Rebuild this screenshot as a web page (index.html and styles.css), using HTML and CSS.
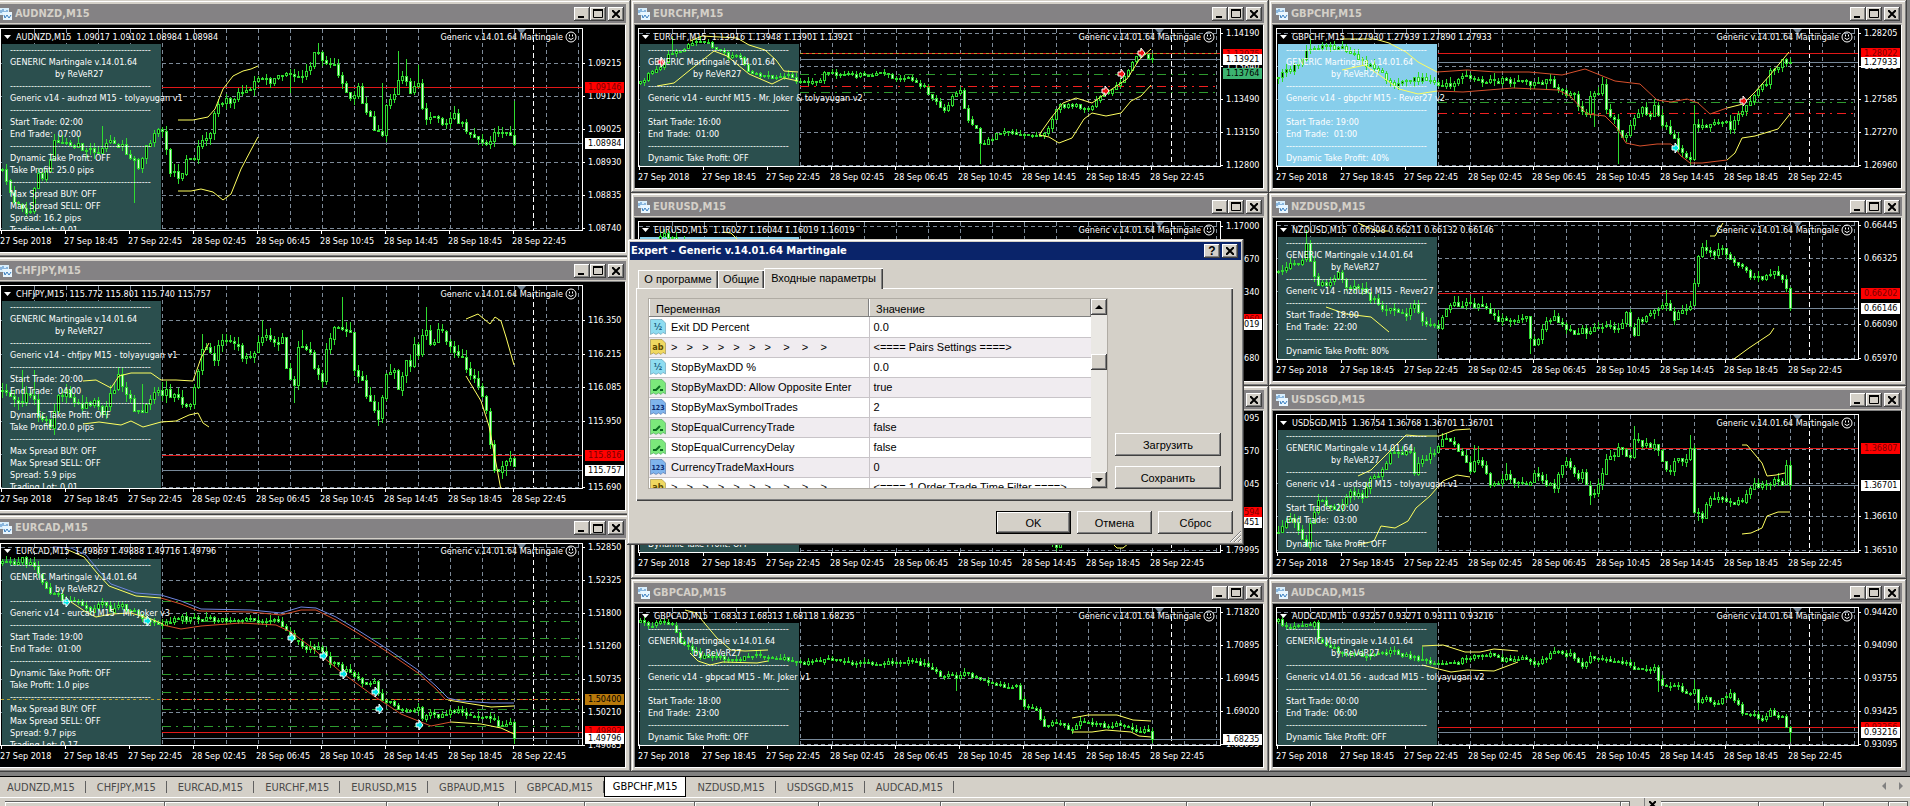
FILE: index.html
```html
<!DOCTYPE html>
<html lang="ru">
<head>
<meta charset="utf-8">
<title>Expert - Generic v.14.01.64 Martingale</title>
<link rel="stylesheet" href="styles.css">
</head>
<body>
<main class="workspace">
  <div class="column column-three" data-symbols="AUDNZD CHFJPY EURCAD"></div>
  <div class="column column-four" data-symbols="EURCHF EURUSD GBPAUD GBPCAD"></div>
  <div class="column column-four" data-symbols="GBPCHF NZDUSD USDSGD AUDCAD"></div>
</main>

<nav class="chart-tabs" aria-label="Charts">
  <button class="chart-tab">AUDNZD,M15</button>
  <button class="chart-tab">CHFJPY,M15</button>
  <button class="chart-tab">EURCAD,M15</button>
  <button class="chart-tab">EURCHF,M15</button>
  <button class="chart-tab">EURUSD,M15</button>
  <button class="chart-tab">GBPAUD,M15</button>
  <button class="chart-tab">GBPCAD,M15</button>
  <button class="chart-tab active">GBPCHF,M15</button>
  <button class="chart-tab">NZDUSD,M15</button>
  <button class="chart-tab">USDSGD,M15</button>
  <button class="chart-tab">AUDCAD,M15</button>
  <span class="tab-arrows">
    <button aria-label="Previous"><svg width="5" height="8"><path d="M5 0L1 4L5 8z"/></svg></button>
    <button aria-label="Next"><svg width="5" height="8"><path d="M0 0L4 4L0 8z"/></svg></button>
  </span>
</nav>

<div class="terminal">
  <div class="terminal-left">
    <i class="w160"></i><i class="w222"></i><i class="w112"></i><i class="w86"></i><i class="w110"></i><i class="w124"></i><i class="w122"></i><i class="w124"></i><i class="w122"></i><i class="w124"></i><i class="w122"></i><i class="w188"></i><i></i>
  </div>
  <div class="terminal-right">
    <svg class="terminal-close" width="7" height="7"><path d="M0 0L7 7M7 0L0 7" stroke="#000" stroke-width="2"/></svg>
    <i class="w98"></i><i class="w65"></i><i class="w65"></i><i></i>
  </div>
</div>

<section class="dialog" role="dialog" aria-labelledby="dialog-title">
  <header class="dialog-title">
    <h1 id="dialog-title">Expert - Generic v.14.01.64 Martingale</h1>
    <button class="caption-button help" aria-label="Help">?</button>
    <button class="caption-button" aria-label="Close"><svg width="8" height="8"><path d="M0 0L8 8M8 0L0 8"/></svg></button>
  </header>
  <div class="dialog-tabs">
    <button class="dialog-tab tab-about">О программе</button>
    <button class="dialog-tab tab-common">Общие</button>
    <button class="dialog-tab tab-inputs selected">Входные параметры</button>
  </div>
  <div class="dialog-pane">
    <div class="inputs-list">
      <div class="inputs-view">
        <table class="inputs">
          <colgroup><col class="col-name"><col></colgroup>
          <thead><tr><th>Переменная</th><th>Значение</th></tr></thead>
          <tbody id="inputs-rows"></tbody>
        </table>
      </div>
      <div class="scrollbar">
        <button class="scroll-button" aria-label="Up"><svg width="8" height="4"><path d="M0 4L4 0L8 4z"/></svg></button>
        <div class="scroll-track"><div class="scroll-thumb"></div></div>
        <button class="scroll-button" aria-label="Down"><svg width="8" height="4"><path d="M0 0L4 4L8 0z"/></svg></button>
      </div>
    </div>
    <div class="pane-buttons">
      <button class="push">Загрузить</button>
      <button class="push">Сохранить</button>
    </div>
  </div>
  <footer class="dialog-footer">
    <button class="push default">OK</button>
    <button class="push">Отмена</button>
    <button class="push">Сброс</button>
  </footer>
  <svg class="grip" width="12" height="12"><path d="M1 12L12 1M5 12L12 5M9 12L12 9" stroke="#808080"/><path d="M2 12L12 2M6 12L12 6M10 12L12 10" stroke="#fff"/></svg>
</section>
<script src="charts.js"></script>
</body>
</html>
```
FILE: styles.css
```css
* { box-sizing: border-box; }

body {
  margin: 0;
  height: 100vh;
  display: flex;
  flex-direction: column;
  overflow: hidden;
  background: #d4d0c8;
  color: #000;
  font-family: "DejaVu Sans Condensed", "DejaVu Sans", sans-serif;
  font-size: 9px;
}

button {
  font: inherit;
  color: inherit;
  border: 0;
  padding: 0;
  margin: 0;
  background: #d4d0c8;
}

/* Chart windows */
.workspace {
  flex: 1;
  min-height: 0;
  display: grid;
  grid-template-columns: repeat(3, 1fr);
  margin-left: -7px;
  padding: 0 3px 4px 0;
  background: #808080;
}
.column { display: grid; min-height: 0; min-width: 0; }
.column-three { grid-template-rows: repeat(3, minmax(0, 1fr)); }
.column-four { grid-template-rows: repeat(4, minmax(0, 1fr)); }

.chart-window {
  display: flex;
  flex-direction: column;
  gap: 1px;
  min-height: 0;
  min-width: 0;
  padding: 4px 5px 4px 3px;
  background: #d4d0c8;
  box-shadow: inset -1px -1px #404040, inset 1px 1px #d4d0c8, inset -2px -2px #808080, inset 2px 2px #fff;
}
.chart-title {
  flex: none;
  height: 19px;
  display: flex;
  align-items: center;
  padding: 0 2px 0 4px;
  background: #848284;
  color: #d4d0c8;
}
.chart-title svg.app-icon { margin-right: 3px; }
.chart-title h2 {
  margin: 0;
  flex: 1;
  font-size: 11px;
  line-height: 16px;
  font-weight: bold;
}
.caption-button {
  width: 16px;
  height: 14px;
  display: flex;
  align-items: center;
  justify-content: center;
  box-shadow: inset -1px -1px #404040, inset 1px 1px #fff, inset -2px -2px #808080;
}
.caption-button.last { margin-left: 2px; }
.caption-button svg { stroke: #000; stroke-width: 2; fill: none; }

.chart-body {
  flex: 1;
  min-height: 0;
  display: grid;
  grid-template-columns: minmax(0, 1fr) 42px;
  grid-template-rows: minmax(0, 1fr) 21px;
  padding: 3px 0 0 3px;
  border: 1px solid;
  border-color: #808080 #fff #fff #808080;
  background: #000;
  color: #fff;
}
.plot {
  position: relative;
  overflow: hidden;
  border: 1px solid #fff;
}
.plot-lines {
  position: absolute;
  inset: 0;
  width: 100%;
  height: 100%;
}
.plot-head {
  position: relative;
  display: flex;
  align-items: center;
  height: 15px;
  padding: 0 5px 0 3px;
  line-height: 12px;
  white-space: pre;
}
.plot-head svg { margin-right: 5px; }
.plot-head .quote { flex: 1; }
.plot-head svg.smile { margin: 0 0 0 2px; }
.info {
  position: relative;
  margin: 0 0 0 9px;
  line-height: 12px;
  white-space: pre;
}
.info div { height: 12px; }
.info .center { padding-left: 45px; }
.info .rule { font-family: "Liberation Sans", Arial, sans-serif; }

.price-axis { position: relative; line-height: 11px; }
.price-axis span {
  position: absolute;
  left: 0;
  right: 1px;
  height: 11px;
  padding-left: 5px;
}
.price-axis span::before {
  content: "";
  position: absolute;
  left: 0;
  top: 5px;
  width: 2px;
  height: 1px;
  background: #fff;
}
.price-axis .tag { left: 2px; padding-left: 3px; color: #000; background: #fff; }
.price-axis .tag::before { display: none; }
.price-axis .red { background: #f00; color: #7a0000; }
.price-axis .gold { background: #b8780b; }
.price-axis .green { background: #3cb371; }

.date-axis { grid-column: 1 / -1; display: flex; overflow: hidden; }
.date-axis span {
  flex: none;
  width: 64px;
  padding-top: 5px;
  line-height: 11px;
  white-space: nowrap;
  background: linear-gradient(#fff, #fff) 1px 0 / 1px 3px no-repeat;
}

/* Tabs of the open charts */
.chart-tabs {
  flex: none;
  height: 22px;
  display: flex;
  align-items: flex-start;
  border-top: 1px solid #000;
  border-bottom: 1px solid #fff;
  color: #4a4a4a;
}
.chart-tab {
  height: 20px;
  padding: 0 11px;
  font-size: 11px;
  background: linear-gradient(#606060, #606060) right 4px / 1px 12px no-repeat;
}
.chart-tab:first-child { padding-left: 7px; }
.chart-tab.active {
  padding: 0 8px;
  color: #000;
  background: #fff;
  border: solid #000;
  border-width: 0 1px 1px 1px;
}
.tab-arrows { margin-left: auto; display: flex; gap: 13px; padding: 5px 6px 0 0; }
.tab-arrows svg { display: block; fill: #808080; }

.terminal { flex: none; height: 8px; display: flex; overflow: hidden; }
.terminal-left { flex: 1; display: flex; padding: 3px 14px 0 5px; border-right: 1px solid #808080; }
.terminal-right { flex: none; width: 265px; display: flex; padding: 3px 2px 0 4px; }
.terminal-close { margin-right: 5px; }
.terminal i {
  flex: none;
  height: 6px;
  border: solid #606060;
  border-width: 1px 1px 0 0;
  box-shadow: inset 1px 1px #fff;
}
.terminal i:last-child { flex: 1; }
.w65 { width: 65px; } .w86 { width: 86px; } .w98 { width: 98px; }
.w110 { width: 110px; } .w112 { width: 112px; } .w122 { width: 122px; }
.w124 { width: 124px; } .w160 { width: 160px; } .w188 { width: 188px; } .w222 { width: 222px; }

/* Expert properties dialog */
.dialog {
  position: absolute;
  left: 627px;
  top: 239px;
  width: 617px;
  padding: 3px 3px 11px;
  background: #d4d0c8;
  box-shadow: inset -1px -1px #404040, inset 1px 1px #d4d0c8, inset -2px -2px #808080, inset 2px 2px #fff;
  font-family: "Liberation Sans", Arial, sans-serif;
  font-size: 11px;
}
.dialog-title {
  display: flex;
  align-items: center;
  height: 18px;
  padding: 0 3px 0 1px;
  background: #0a246a;
  color: #fff;
}
.dialog-title h1 {
  margin: 0;
  flex: 1;
  font: bold 11px/16px "DejaVu Sans Condensed", "DejaVu Sans", sans-serif;
}
.dialog-title .caption-button { margin-left: 2px; color: #000; }
.caption-button.help { font-weight: bold; font-size: 12px; }

.dialog-tabs { display: flex; align-items: flex-end; height: 28px; padding-left: 8px; }
.dialog-tab {
  height: 18px;
  box-shadow: inset 1px 1px #fff, inset -1px 0 #404040, inset -2px 0 #808080;
}
.tab-about { width: 80px; }
.tab-common { width: 46px; }
.tab-inputs { width: 119px; }
.dialog-tab.selected { position: relative; height: 21px; margin-bottom: -1px; padding-bottom: 2px; }
.dialog-pane {
  display: flex;
  justify-content: space-between;
  margin: 0 8px 0 6px;
  padding: 10px 12px 12px 12px;
  box-shadow: inset 1px 1px #fff, inset -1px -1px #404040, inset -2px -2px #808080;
}
.inputs-list {
  flex: none;
  display: flex;
  width: 460px;
  height: 191px;
  border: 1px solid;
  border-color: #404040 #fff #fff #404040;
  outline: 1px solid #b0aca4;
  outline-offset: -1px;
  background: #fff;
}
.inputs-view { flex: 1; overflow: hidden; }
.inputs { width: 100%; border-collapse: collapse; table-layout: fixed; }
.col-name { width: 220px; }
.inputs th {
  height: 18px;
  padding: 2px 0 0 7px;
  text-align: left;
  font-weight: normal;
  line-height: 14px;
  background: #d4d0c8;
  box-shadow: inset -1px -1px #808080, inset 1px 0 #fff;
}
.inputs td {
  height: 20px;
  padding: 0 0 0 4px;
  line-height: 16px;
  white-space: pre;
  border-bottom: 1px solid #c8c4c8;
}
.inputs td:first-child { padding-left: 1px; border-right: 1px solid #c8c4c8; }
.inputs tr:nth-child(even) td { background: #f0ecf0; }
.inputs .cell { display: flex; align-items: center; gap: 5px; }
.scrollbar {
  flex: none;
  width: 16px;
  display: flex;
  flex-direction: column;
  background: #eae8e4;
}
.scroll-button, .scroll-thumb {
  flex: none;
  height: 16px;
  background: #d4d0c8;
  box-shadow: inset -1px -1px #404040, inset 1px 1px #fff, inset -2px -2px #808080;
}
.scroll-button svg { display: block; margin: auto; }
.scroll-track { flex: 1; padding-top: 39px; }
.pane-buttons { display: flex; flex-direction: column; justify-content: flex-end; gap: 10px; }
.push {
  height: 23px;
  box-shadow: inset -1px -1px #404040, inset 1px 1px #fff, inset -2px -2px #808080;
}
.pane-buttons .push { width: 106px; }
.dialog-footer { display: flex; justify-content: flex-end; gap: 6px; padding: 10px 8px 0 0; }
.dialog-footer .push { width: 75px; }
.push.default { border: 1px solid #000; }
.grip { position: absolute; right: 3px; bottom: 3px; }
```
FILE: charts.js
```js
// Every path is a list of x,y pairs. Price paths use the bar number for x.
const SEP = `<div class="rule">${'-'.repeat(47)}</div>`;
const DATES = ['27 Sep 2018', '27 Sep 18:45', '27 Sep 22:45', '28 Sep 02:45', '28 Sep 06:45',
  '28 Sep 10:45', '28 Sep 14:45', '28 Sep 18:45', '28 Sep 22:45'];

const CHARTS = {
  AUDNZD: {
    quote: '1.09017 1.09102 1.08984 1.08984', name: 'Generic v14 - audnzd M15 - tolyayugan v1',
    start: '02:00', end: '07:00', tp: 'OFF', pips: '25.0', spread: '16.2', lot: '0.01', vol: 7,
    labels: [[34, '1.09215'], [67, '1.09120'], [100, '1.09025'], [133, '1.08930'], [166, '1.08835'], [199, '1.08740']],
    tags: [[58, '1.09146', 'red'], [114, '1.08984', '']],
    lines: [[58, 'red'], [114, 'gray']],
    price: '0,139 1.5,162 3,172 5,177 6.6,190 8,162 9,142 10,149 12,130 13,113 15,110 18,116 21,120 24.5,121 27,112 30,116 32,128 34,138 36,117 39,103 40.5,106 41.5,138 44.5,152 45.5,133 48,127 50,113 52,102 53.5,76 57,71 61,62 64.5,46 67,53 70,44 72.5,47 76.5,41 78,20 80.5,31 83,38 85,54 86.5,71 89,60 91,82 93,98 95,107 96,79 98.5,58 100,46 102,63 104,52 105.5,92 107.5,82 110,95 113,87 116,100 119.5,110 121,118 122.5,107 125,101 126.5,105 128,115',
    spikes: { 25: 97, 33: 174, 40: 98, 79: 14, 99: 22, 101: 30, 104: 36, 128: 72, 95: 54, 72: 64 },
    bands: [['yellow', '177,91 192,91 207,88 214,80 222,60 232,47 242,42 250,40 257,37'],
      ['yellow', '177,162 190,162 200,160 212,163 222,171 230,165 240,140 250,121 257,108']]
  },
  CHFJPY: {
    quote: '115.772 115.801 115.740 115.757', name: 'Generic v14 - chfjpy M15 - tolyayugan v1',
    start: '20:00', end: '04:00', tp: 'OFF', pips: '20.0', spread: '5.9', lot: '0.01', vol: 8,
    labels: [[34, '116.350'], [68, '116.215'], [101, '116.085'], [135, '115.950'], [201, '115.690'], [168, '']],
    tags: [[169, '115.816', 'red'], [184, '115.757', '']],
    lines: [[169, 'red'], [184, 'gray']],
    price: '0,103 2,110 4,115 7,106 9,126 12,138 14,112 16,104 18,118 20,122 23,115 25,128 27.5,106 29,92 31,108 33,124 35,123 38,107 43,107 45,118 46.5,122 48,103 49,82 50.5,60 53,73 54.5,56 58.5,58 60,72 62,70 65,52 67,50 68.5,58 70,53 71,84 73,96 74,63 75.5,54 77.5,74 80,95 81.5,51 84,40 87,48 88,82 90.5,101 92,116 94.5,133 95.5,95 97.5,78 99,101 100.5,78 102,78 102.6,52 103.6,76 105.5,42 107,58 109.5,43 112,62 115,70 117.5,92 120,110 121.5,136 122.5,182 125,183 126.5,172 128,180',
    spikes: { 5: 84, 8: 84, 35: 98, 50: 48, 65: 34, 73: 117, 75: 44, 85: 11, 94: 140, 106: 21, 126: 190 },
    bands: [['yellow', '82,95 95,94 110,102 118,90 130,87 150,87 160,94 175,94 192,95 200,72 208,57'],
      ['yellow', '82,138 98,136 120,139 130,135 142,141 160,136 175,135 188,129 197,127 202,137 208,141'],
      ['yellow', '465,33 477,28 489,38 494,31 500,35 505,51 513,79'],
      ['yellow', '465,90 480,115 488,140 494,172 500,204']]
  },
  EURCAD: {
    quote: '1.49869 1.49888 1.49716 1.49796', name: 'Generic v14 - eurcad M15 - Mr. Joker v3',
    start: '19:00', end: '01:00', tp: 'OFF', pips: '1.0', spread: '9.7', lot: '0.17', vol: 5,
    labels: [[3, '1.52850'], [36, '1.52325'], [69, '1.51800'], [102, '1.51260'], [135, '1.50735'], [168, '1.50210'], [201, '1.49685']],
    tags: [[187, '1.49892', 'red'], [194, '1.49796', ''], [155, '1.50400', 'gold']],
    lines: [[57, 'dgreen'], [77, 'dgreen'], [94, 'dgreen'], [112, 'dgreen'], [130, 'dgreen'], [148, 'dgreen'], [165, 'dgreen'], [182, 'dgreen'], [155, 'dred'], [188, 'red'], [194, 'gray']],
    over: [[155, 'dgold']],
    price: '0,17 3,21 5,15 8,21 10,36 12,47 16,57 19,58 22,66 25,58 27,66 30,62 34,70 36,76 40,80 45,73 51,75 61,76 67,78 69.5,74 70.5,86 72.5,93 75.5,104 79.5,102 81.5,116 86,127 90,138 93.5,137 94.5,158 97.5,158 100.5,169 104,164 105,174 106.5,167 109,172 113,166 117.5,173 122.5,175 125.5,184 127,178 128,194',
    spikes: { 8: 13, 95: 154, 128: 200 },
    bands: [['blue', '52,3 70,4 85,11 98,27 110,40 135,49 160,51 180,57 200,65 250,66 280,69 300,63 315,64 335,73 355,85 385,104 417,126 435,142 447,154 460,157 490,159 513,159'],
      ['yellow', '65,5 83,13 96,29 108,42 135,52 160,54'], ['orange', '160,54 180,60 198,67 250,68 280,71 300,66 315,66 335,76 355,88 385,107 417,129 435,145 445,156'], ['yellow', '447,156 465,159 490,163 513,162'],
      ['yellow', '70,58 85,68 95,73 110,70 130,69 150,75 162,80'], ['orange', '162,81 180,85 200,82 240,79 275,81 290,88 310,103 340,128 370,150 400,170 430,182 450,178'], ['yellow', '450,178 480,180 500,184 513,190']],
    buys: '65,58 146,77 290,94 322,112 342,130 374,148 378,165 418,181'
  },
  EURCHF: {
    quote: '1.13916 1.13948 1.13901 1.13921', name: 'Generic v14 - eurchf M15 - Mr. Joker & tolyayugan v2',
    start: '16:00', end: '01:00', tp: 'OFF', pips: '40.0', vol: 4,
    labels: [[4, '1.14190'], [37, '1.13840'], [70, '1.13490'], [103, '1.13150'], [136, '1.12800']],
    tags: [[25, '1.13975', 'red'], [30, '1.13921', ''], [44, '1.13764', 'green']],
    lines: [[24, 'red'], [24, 'dgold'], [30, 'gray'], [45, 'dgreen'], [57, 'dred'], [63, 'dgreen']],
    price: '0,52 2.5,44 5.5,35 7.5,24 11,20 14,11 17,14 19,20 22.5,28 24.5,26 27.5,44 33,47 37,45 40,53 44.5,53 46,44 53,46 61,44 64,50 68,50 71,58 72.5,69 76.5,81 78,65 80,62 81.5,90 84,100 85.5,118 88,108 91,101 93,104 100,105 102,99 104.5,76 109,77 112,81 115,67 117,62 120.5,50 122.5,36 125,24 127,29 128,29',
    spikes: { 8: 8, 85: 135, 128: 24 },
    bands: [['yellow', '51,12 63,7 98,9 110,16 126,21 137,31 145,42 159,43'],
      ['yellow', '18,57 35,54 51,41 75,22 88,27 110,45 133,55 145,49 159,52'],
      ['yellow', '400,106 412,89 424,74 437,69 453,74 473,60 488,50 500,31 512,20'],
      ['yellow', '400,106 410,108 420,114 433,109 445,90 453,84 467,87 482,84 492,72 502,67 512,56']],
    sells: '22,33 466,62 482,45 502,24'
  },
  EURUSD: {
    quote: '1.16027 1.16044 1.16019 1.16019', name: 'Generic v14 - eurusd M15 - Rever27 v2',
    start: '18:00', end: '01:00', tp: 'OFF', pips: '20.0', vol: 5, panel: 'sky',
    labels: [[4, '1.17000'], [37, '1.16670'], [70, '1.16340'], [103, ''], [136, '1.15680']],
    tags: [[97, '1.16060', 'red'], [102, '1.16019', '']],
    lines: [[97, 'red'], [102, 'gray']],
    price: '0,30 6,13 8,17 20,30 60,60 90,110 128,102',
    spikes: { 5: 10, 7: 8 },
    bands: [['yellow', '84,10 92,11 98,17 110,40']]
  },
  GBPAUD: {
    quote: '1.80520 1.80560 1.80401 1.80451', name: 'Generic v14 - gbpaud M15 - tolyayugan v1',
    start: '20:00', end: '03:00', tp: 'OFF', pips: '30.0', vol: 5,
    labels: [[3, '1.82095'], [36, '1.81570'], [69, '1.81045'], [102, ''], [135, '1.79995']],
    tags: [[97, '1.80594', 'red'], [107, '1.80451', '']],
    lines: [[97, 'red'], [107, 'gray']],
    price: '0,20 30,40 60,60 100,110 104,130 110,110 128,107',
    spikes: { 104: 134 },
    bands: [['yellow', '470,125 478,133 484,133 490,128']]
  },
  GBPCAD: {
    quote: '1.68313 1.68313 1.68118 1.68235', name: 'Generic v14 - gbpcad M15 - Mr. Joker v1',
    start: '18:00', end: '23:00', tp: 'OFF', pips: '30.0', vol: 4,
    labels: [[4, '1.71820'], [37, '1.70895'], [70, '1.69945'], [103, '1.69020'], [136, '1.68095']],
    tags: [[131, '1.68235', '']],
    lines: [[131, 'gray']],
    price: '0,12 2.5,17 5.5,14 8.5,19 10,33 13,43 15,48 21,50 24.5,50 28.5,46 33,49 40,54 48,51 56,56 68,53 73,59 75.5,68 78,65 79,71 81,64 85,72 90,78 94,77 95.5,96 99,103 101,117 104,114 107.5,122 108.5,116 112,112 116,118 120,116 124.5,124 127,121 128,131',
    spikes: { 79: 83, 81: 60, 95: 78, 128: 135 },
    bands: [['yellow', '46,2 57,5 67,17 78,30 92,42 106,43 129,42'],
      ['yellow', '51,45 59,53 71,57 84,54 118,55 129,53'],
      ['yellow', '433,110 449,107 478,107 494,112 512,113'],
      ['yellow', '433,124 453,124 467,122 492,124 500,128 512,129']]
  },
  GBPCHF: {
    quote: '1.27930 1.27939 1.27890 1.27933', name: 'Generic v14 - gbpchf M15 - Rever27 v2',
    start: '19:00', end: '01:00', tp: '40%', pips: '20.0', vol: 6, panel: 'sky',
    labels: [[4, '1.28205'], [37, '1.27893'], [70, '1.27585'], [103, '1.27270'], [136, '1.26960']],
    tags: [[24, '1.28022', 'red'], [33, '1.27933', '']],
    lines: [[24, 'red'], [33, 'gray'], [73, 'dgreen'], [84, 'dred']],
    price: '0,47 3.5,39 7,24 11.5,17 16,18 19,25 22,34 25.5,40 28,56 32,51 37,50 41.5,55 44,55 46,46 50,52 55,51 61,54 68,52 71,62 74,66 75,79 77,84 78,64 79.5,66 81,57 82,81 84,91 85.5,109 87,107 88,94 90.5,84 91,76 92.5,92 94,76 95.5,90 97,100 99,111 100,121 103,127 104,94 107,100 110.5,91 113,98 114.5,86 117.5,76 118.5,68 122,53 122.5,43 126,32 128,33',
    spikes: { 8: 8, 79: 98, 81: 48, 85: 135, 104: 76 },
    bands: [['yellow', '63,10 98,10 112,14 129,23 141,33 160,43'],
      ['yellow', '65,41 88,36 108,50 122,60 141,65 160,62'],
      ['orange', '160,43 190,41 219,43 252,43 285,46 308,40 338,52 363,55 380,71 394,73 410,70 421,74 433,85 450,79'],
      ['yellow', '450,79 466,75 478,63 493,46 512,23'],
      ['orange', '160,62 186,63 211,61 236,59 281,61 293,67 310,85 328,87 340,99 349,114 363,117 380,115 394,115 404,127 413,134 425,134 450,131'],
      ['yellow', '450,131 458,124 465,109 478,107 501,100 513,85']],
    buys: '398,119', sells: '466,72'
  },
  NZDUSD: {
    quote: '0.66208 0.66211 0.66132 0.66146', name: 'Generic v14 - nzdusd M15 - Rever27',
    start: '18:00', end: '22:00', tp: '80%', pips: '15.0', vol: 6,
    labels: [[3, '0.66445'], [36, '0.66325'], [69, ''], [102, '0.66090'], [136, '0.65970']],
    tags: [[71, '0.66202', 'red'], [86, '0.66146', '']],
    lines: [[71, 'red'], [86, 'gray']],
    price: '0,48 3,43 6,38 6.6,14 8.5,49 10,61 12.5,63 15,51 17,66 22,69 24.5,82 28,88 32,93 34,84 36,100 40,107 41.5,91 44,83 52,83 54,96 59,101 62,96 63.5,124 65,115 67,99 69,94 71,101 74,111 79.5,106 84.5,106 87,93 89,113 90,99 94.5,84 97.5,84 99,97 101,88 103.5,84 104.5,44 105.5,23 109,31 110.5,22 113.5,41 116.5,48 118.5,56 121.5,54 124,50 126.5,58 127,69 128,86',
    spikes: { 7: 8, 51: 74, 63: 132, 97: 68, 107: 18 },
    bands: [['yellow', '81,1 90,5 100,9 112,9'], ['yellow', '49,85 69,92 94,95 112,110'],
      ['yellow', '433,14 438,14 446,1'], ['yellow', '457,137 472,126 493,112 497,106']]
  },
  USDSGD: {
    quote: '1.36754 1.36768 1.36701 1.36701', name: 'Generic v14 - usdsgd M15 - tolyayugan v1',
    start: '20:00', end: '03:00', tp: 'OFF', pips: '30.0', vol: 6,
    labels: [[34, ''], [68, ''], [101, '1.36610'], [135, '1.36510']],
    tags: [[33, '1.36807', 'red'], [70, '1.36701', '']],
    lines: [[33, 'red'], [70, 'gray']],
    price: '0,116 2.5,104 4.5,109 7,130 8.5,100 10,85 15,95 18,75 21,83 23,63 25,60 27,45 29,35 33,40 34,56 36,45 39,36 41,25 44,27 46,41 48,57 49.5,44 51,48 53,69 57,61 60,69 62.5,69 64,55 66,66 69,70 70.5,53 72,47 74,61 76,60 78.5,82 80.5,66 81.5,46 85,34 88,40 89,26 94.5,31 97.5,57 99,45 102.6,45 103,31 104,97 106,101 107.5,83 111.5,85 115.5,88 118.5,70 124,67 126,71 127,52 128,70',
    spikes: { 49: 30, 50: 31, 57: 48, 78: 90, 89: 11, 103: 20, 105: 106, 128: 47 },
    bands: [['yellow', '81,61 94,55 108,41 129,20 141,21 162,21 178,15 193,14'],
      ['yellow', '81,130 97,126 104,111 118,113 131,106 139,93 153,81 166,66 180,60 193,62'],
      ['yellow', '465,30 470,30 485,48 490,61 499,60 508,58'],
      ['yellow', '465,119 474,118 485,113 490,101 501,97 513,97']]
  },
  AUDCAD: {
    quote: '0.93257 0.93271 0.93111 0.93216', name: 'Generic v14.01.56 - audcad M15 - tolyayugan v2',
    start: '00:00', end: '06:00', tp: 'OFF', pips: '25.0', vol: 4,
    labels: [[4, '0.94420'], [37, '0.94090'], [70, '0.93755'], [103, '0.93425'], [136, '0.93095']],
    tags: [[119, '0.93256', 'red'], [124, '0.93216', '']],
    lines: [[119, 'red'], [124, 'gray']],
    price: '0,11 2,20 5,19 9,15 10,32 14,41 17,46 22,47 29,43 36,53 40,57 44,55 47,50 53,46 56,51 61,50 64,56 69,43 73,47 76.5,58 78,50 80.5,48 82.5,53 87,54 89,60 94,60 95.5,76 100,78 102,87 104,80 105,95 107,90 109,96 113,85 116,104 119,105 121,112 123,104 125,109 126.5,105 127,118 128,124',
    spikes: { 36: 39, 69: 39, 95: 84, 104: 72, 105: 102, 128: 134 },
    bands: [['yellow', '145,38 166,37 188,44 203,44 217,41 241,43'],
      ['yellow', '145,57 174,64 190,62 217,63 241,54']]
  }
};

const COLORS = {
  red: '#e01818', gray: '#778899', yellow: '#ffff60', orange: '#d8502c', blue: '#6f86e0',
  dgreen: '#2e9a2e', dred: '#f02020', dgold: '#b8a030'
};

const pairs = s => s.split(' ').map(p => p.split(',').map(Number));

function candles(chart, seed) {
  let state = seed;
  const rnd = () => (state = (state * 16807) % 2147483647) / 2147483647;
  const pts = pairs(chart.price);
  const at = i => {
    let k = 1;
    while (k < pts.length - 1 && pts[k][0] < i) k++;
    const [x0, y0] = pts[k - 1], [x1, y1] = pts[k];
    return y0 + (y1 - y0) * Math.min(1, (i - x0) / (x1 - x0));
  };
  let open = at(0) + 2, wicks = '', up = '', down = '';
  for (let i = 0; i <= 128; i++) {
    const close = at(i) + (i < 128 ? (rnd() - 0.5) * chart.vol : 0);
    const x = 1 + i * 4;
    const top = Math.round(Math.min(open, close));
    const height = Math.max(1, Math.round(Math.abs(open - close)));
    let high = top - Math.round(rnd() * chart.vol);
    let low = top + height + Math.round(rnd() * chart.vol);
    const spike = chart.spikes[i];
    if (spike !== undefined) { high = Math.min(high, spike); low = Math.max(low, spike); }
    wicks += `M${x}.5 ${high}V${low}`;
    const box = `M${x - 1}.5 ${top}.5h2v${height}h-2z`;
    if (close < open) up += box; else down += box;
    open = close;
  }
  return `<g stroke="#2fdc2f"><path d="${wicks}"/><path d="${up}" fill="#000"/><path d="${down}" fill="#d8ffd8"/></g>`;
}

function hline([y, kind], from) {
  const dash = kind === 'dgreen' || kind === 'dred' ? ' stroke-dasharray="9 5 2 5"' : kind === 'dgold' ? ' stroke-dasharray="3 3"' : '';
  return `<line x1="${from}" x2="100%" y1="${y}.5" y2="${y}.5" stroke="${COLORS[kind]}"${dash}/>`;
}

function plotLines(chart, seed) {
  let s = '<g shape-rendering="crispEdges" fill="none">';
  for (let x = 33; x < 580; x += 32) s += `<line x1="${x}.5" x2="${x}.5" y1="0" y2="100%" stroke="#7d8a98" stroke-dasharray="4 3"/>`;
  for (const [y] of chart.labels) s += `<line x1="0" x2="100%" y1="${y}.5" y2="${y}.5" stroke="#7d8a98" stroke-dasharray="4 3"/>`;
  s += '<line x1="532.5" x2="532.5" y1="0" y2="100%" stroke="#fff" stroke-dasharray="5 3"/>';
  s += chart.lines.map(l => hline(l, 161)).join('');
  s += `<rect x="1" y="15" width="159" height="100%" fill="${chart.panel === 'sky' ? '#87ceeb' : '#2b4f4e'}"/>`;
  s += (chart.over || []).map(l => hline(l, 0)).join('');
  s += candles(chart, seed) + '</g>';
  for (const [color, path] of chart.bands) s += `<polyline points="${path}" fill="none" stroke="${COLORS[color]}"/>`;
  const arrow = (list, fill) => list ? pairs(list).map(([x, y]) =>
    `<path d="M${x - 3} ${y - 2}h3v-3l4 5l-4 5v-3h-3z" fill="${fill}" stroke="#fff"/>`).join('') : '';
  s += arrow(chart.buys, '#00e5e5') + arrow(chart.sells, '#f01010');
  return s + '<path d="M516 0h9l-4.500 5z" fill="#708090"/>';
}

function windowMarkup(symbol, seed) {
  const c = CHARTS[symbol];
  const place = (y, text, cls) => `<span${cls} style="top:${y - 4}px">${text}</span>`;
  const account = c.lot
    ? `${SEP}<div>Max Spread BUY: OFF</div><div>Max Spread SELL: OFF</div><div>Spread: ${c.spread} pips</div><div>Trading Lot: ${c.lot}</div>`
    : '';
  return `<article class="chart-window">
    <header class="chart-title">
      <svg class="app-icon" width="12" height="12"><rect width="9" height="7" fill="#d8eefc"/><path d="M1 5V2M3 4V1M5 5V3M7 4V2" stroke="#3a7fc0"/><rect x="3" y="4" width="9" height="8" fill="#e8f6ff"/><path d="M4 7l1 3l2-3l2 3l2-3" fill="none" stroke="#3a7fc0"/></svg>
      <h2>${symbol},M15</h2>
      <button class="caption-button" aria-label="Minimize"><svg width="8" height="8"><path d="M0 7H6"/></svg></button>
      <button class="caption-button" aria-label="Maximize"><svg width="10" height="9"><path d="M.5 1H9.500" /><path d="M.5 0V8.500H9.500V0" stroke-width="1"/></svg></button>
      <button class="caption-button last" aria-label="Close"><svg width="8" height="8"><path d="M0 0L8 8M8 0L0 8"/></svg></button>
    </header>
    <div class="chart-body">
      <div class="plot">
        <svg class="plot-lines">${plotLines(c, seed)}</svg>
        <div class="plot-head"><svg width="7" height="4"><path d="M0 0h7L3.500 4z" fill="#fff"/></svg><span class="quote">${symbol},M15  ${c.quote}</span><span>Generic v.14.01.64 Martingale</span><svg class="smile" width="12" height="12" fill="none" stroke="#fff"><circle cx="6" cy="6" r="5"/><path d="M3.500 7q2.500 3 5 0M4.500 3.500v2M7.500 3.500v2"/></svg></div>
        <div class="info">${SEP}<div>GENERIC Martingale v.14.01.64</div><div class="center">by ReVeR27</div>${SEP}<div>${c.name.replace('&', '&amp;')}</div>${SEP}<div>Start Trade: ${c.start}</div><div>End Trade:  ${c.end}</div>${SEP}<div>Dynamic Take Profit: ${c.tp}</div><div>Take Profit: ${c.pips} pips</div>${account}</div>
      </div>
      <div class="price-axis">${c.labels.filter(l => l[1]).map(([y, t]) => place(y, t, '')).join('')}${c.tags.map(([y, t, k]) => place(y, t, ` class="tag ${k}"`)).join('')}</div>
      <div class="date-axis">${DATES.map(d => `<span>${d}</span>`).join('')}</div>
    </div>
  </article>`;
}

document.querySelectorAll('.column').forEach(column => {
  column.innerHTML = column.dataset.symbols.split(' ')
    .map(symbol => windowMarkup(symbol, symbol.charCodeAt(0) * 977 + symbol.charCodeAt(4) * 131)).join('');
});

const ICONS = {
  real: ['#8fdcf0', '#1a5f80', '½'], text: ['#f0d860', '#5a4800', 'ab'],
  bool: ['#7be87b', '#0a6a20', ''], int: ['#7fb4ec', '#0a2a70', '123']
};
const INPUTS = [
  ['real', 'Exit DD Percent', '0.0'],
  ['text', '>   >   >   >   >   >   >    >    >    >', '<==== Pairs Settings ====>'],
  ['real', 'StopByMaxDD %', '0.0'],
  ['bool', 'StopByMaxDD: Allow Opposite Enter', 'true'],
  ['int', 'StopByMaxSymbolTrades', '2'],
  ['bool', 'StopEqualCurrencyTrade', 'false'],
  ['bool', 'StopEqualCurrencyDelay', 'false'],
  ['int', 'CurrencyTradeMaxHours', '0'],
  ['text', '>   >   >   >   >   >   >    >    >    >', '<==== 1 Order Trade Time Filter ====>']
];
const esc = t => t.replace(/</g, '&lt;').replace(/>/g, '&gt;');
document.getElementById('inputs-rows').innerHTML = INPUTS.map(([kind, name, value]) => {
  const [bg, ink, glyph] = ICONS[kind];
  const mark = kind === 'bool'
    ? `<path d="M3 11h3l4-4M10 11h3" fill="none" stroke="${ink}" stroke-width="2"/>`
    : `<text x="8" y="11" text-anchor="middle" font-family="DejaVu Sans Condensed" font-weight="bold" font-size="${kind === 'int' ? 7 : 9}" fill="${ink}">${glyph}</text>`;
  return `<tr><td><span class="cell"><svg width="16" height="16"><path d="M.5 .5H12L15.500 4V15L13 13.500L11 15.500L8.500 14L6 15.500L3.500 14L.5 15.500z" fill="${bg}" stroke="${ink}" stroke-opacity=".35"/>${mark}</svg>${esc(name)}</span></td><td>${esc(value)}</td></tr>`;
}).join('');
```
